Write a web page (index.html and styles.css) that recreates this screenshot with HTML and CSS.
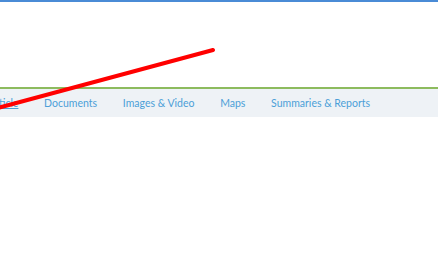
FILE: index.html
```html
<!DOCTYPE html>
<html lang="en">
<head>
  <meta charset="UTF-8">
  <title>Record</title>
  <link rel="stylesheet" href="styles.css">
</head>
<body>
  <div class="top-bar"></div>
  <div class="header"></div>

  <!-- Tabs -->
  <nav class="tabs">
    <a href="#" class="tab active">Article</a>
    <a href="#" class="tab">Documents</a>
    <a href="#" class="tab">Images &amp; Video</a>
    <a href="#" class="tab">Maps</a>
    <a href="#" class="tab">Summaries &amp; Reports</a>
  </nav>

  <svg class="scribble" width="438" height="280" viewBox="0 0 438 280">
    <line x1="-6" y1="109" x2="213" y2="50" stroke="#ff0000" stroke-width="4" stroke-linecap="round"/>
  </svg>
</body>
</html>
```

FILE: styles.css
```css
body { margin: 0; font-family: Lato, "Open Sans", sans-serif; background: #fff; overflow: hidden; }
.top-bar { height: 2px; background: #4a8bd6; }
.header { height: 85px; border-bottom: 2px solid #8dbb5e; }
.tabs { display: flex; gap: 25.7px; height: 28px; align-items: center; background: #eef2f6; margin-left: -12px; padding-right: 20px; white-space: nowrap; }
.tab { font-size: 10.5px; color: #4c9fd8; text-decoration: none; }
.tab.active { text-decoration: underline; }
.scribble { position: absolute; left: 0; top: 0; pointer-events: none; }
```
